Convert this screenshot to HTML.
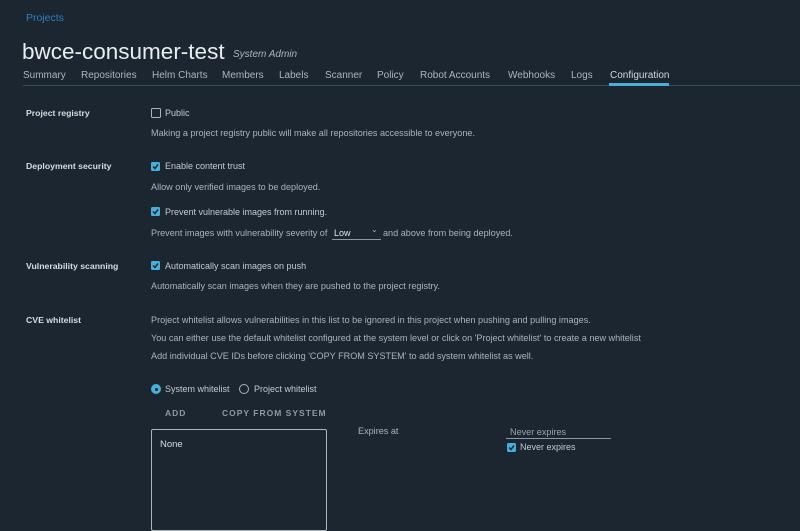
<!DOCTYPE html>
<html><head><meta charset="utf-8"><style>
html,body{margin:0;padding:0}
body{width:800px;height:524px;background:#1c2630;position:relative;overflow:hidden;font-family:"Liberation Sans",sans-serif;color:#c9d1d7}
.a{position:absolute;white-space:nowrap}
.t{font-size:9px;color:#c3cbd1}
.d{font-size:9.1px;color:#aab4bb}
.l{font-size:8.7px;font-weight:bold;color:#d6dde2}
.nav{font-size:10px;color:#aab5bd}
.cb{position:absolute;width:9px;height:9px;border-radius:1.5px;background:#49afd9;}
.cb svg{position:absolute;left:1px;top:1px}
.cbe{position:absolute;width:8px;height:8px;border:1px solid #aab4bb;border-radius:1.5px}
</style></head><body>
<div class="a" style="left:26px;top:12px;font-size:10.5px;color:#2f7fbf">Projects</div>
<div class="a" style="left:22px;top:39px;font-size:22.5px;color:#e8edf0">bwce-consumer-test</div>
<div class="a" style="left:233px;top:49px;font-size:10px;font-style:italic;color:#aab4bb">System Admin</div>
<div class="a nav" style="left:23px;top:70px">Summary</div>
<div class="a nav" style="left:81px;top:70px">Repositories</div>
<div class="a nav" style="left:152px;top:70px">Helm Charts</div>
<div class="a nav" style="left:222px;top:70px">Members</div>
<div class="a nav" style="left:279px;top:70px">Labels</div>
<div class="a nav" style="left:325px;top:70px">Scanner</div>
<div class="a nav" style="left:377px;top:70px">Policy</div>
<div class="a nav" style="left:420px;top:70px">Robot Accounts</div>
<div class="a nav" style="left:508px;top:70px">Webhooks</div>
<div class="a nav" style="left:571px;top:70px">Logs</div>
<div class="a nav" style="left:610px;top:70px;color:#cfd7dc">Configuration</div>
<div class="a" style="left:23px;top:85px;width:777px;height:1px;background:#3a4a56"></div>
<div class="a" style="left:609px;top:83px;width:60px;height:3px;background:#49afd9"></div>

<div class="a l" style="left:26px;top:108px">Project registry</div>
<div class="cbe" style="left:151px;top:108px"></div>
<div class="a t" style="left:165px;top:108px">Public</div>
<div class="a d" style="left:151px;top:128px">Making a project registry public will make all repositories accessible to everyone.</div>

<div class="a l" style="left:26px;top:161px">Deployment security</div>
<div class="cb" style="left:151px;top:162px"><svg width="7" height="7" viewBox="0 0 7 7"><path d="M1 3.5L3 5.5L6 1.5" stroke="#1c2630" stroke-width="1.5" fill="none"/></svg></div>
<div class="a t" style="left:165px;top:161px">Enable content trust</div>
<div class="a d" style="left:151px;top:182px">Allow only verified images to be deployed.</div>
<div class="cb" style="left:151px;top:207px"><svg width="7" height="7" viewBox="0 0 7 7"><path d="M1 3.5L3 5.5L6 1.5" stroke="#1c2630" stroke-width="1.5" fill="none"/></svg></div>
<div class="a t" style="left:165px;top:207px">Prevent vulnerable images from running.</div>
<div class="a d" style="left:151px;top:228px">Prevent images with vulnerability severity of</div>
<div class="a t" style="left:334px;top:228px;color:#e0e6ea">Low</div>
<div class="a" style="left:371px;top:225px;font-size:8px;color:#aab4bb">&#8964;</div>
<div class="a" style="left:332px;top:239px;width:49px;height:1px;background:#8d99a2"></div>
<div class="a d" style="left:383px;top:228px">and above from being deployed.</div>

<div class="a l" style="left:26px;top:261px">Vulnerability scanning</div>
<div class="cb" style="left:151px;top:261px"><svg width="7" height="7" viewBox="0 0 7 7"><path d="M1 3.5L3 5.5L6 1.5" stroke="#1c2630" stroke-width="1.5" fill="none"/></svg></div>
<div class="a t" style="left:165px;top:261px">Automatically scan images on push</div>
<div class="a d" style="left:151px;top:281px">Automatically scan images when they are pushed to the project registry.</div>

<div class="a l" style="left:26px;top:315px">CVE whitelist</div>
<div class="a d" style="left:151px;top:315px">Project whitelist allows vulnerabilities in this list to be ignored in this project when pushing and pulling images.</div>
<div class="a d" style="left:151px;top:333px">You can either use the default whitelist configured at the system level or click on 'Project whitelist' to create a new whitelist</div>
<div class="a d" style="left:151px;top:351px">Add individual CVE IDs before clicking 'COPY FROM SYSTEM' to add system whitelist as well.</div>

<div class="a" style="left:151px;top:384px;width:10px;height:10px;border-radius:50%;background:#49afd9"><div style="position:absolute;left:3.5px;top:3.5px;width:3px;height:3px;border-radius:50%;background:#1c2630"></div></div>
<div class="a t" style="left:165px;top:384px">System whitelist</div>
<div class="a" style="left:239px;top:384px;width:8px;height:8px;border-radius:50%;border:1px solid #aab4bb"></div>
<div class="a t" style="left:254px;top:384px">Project whitelist</div>
<div class="a" style="left:165px;top:408px;font-size:8.5px;font-weight:bold;letter-spacing:1px;color:#8d99a2">ADD</div>
<div class="a" style="left:222px;top:408px;font-size:8.5px;font-weight:bold;letter-spacing:1px;color:#8d99a2">COPY FROM SYSTEM</div>
<div class="a" style="left:151px;top:429px;width:174px;height:100px;border:1px solid #aab4bb;border-radius:2px"></div>
<div class="a" style="left:160px;top:439px;font-size:9.5px;color:#d6dde2">None</div>
<div class="a d" style="left:358px;top:426px">Expires at</div>
<div class="a d" style="left:510px;top:427px;color:#98a3ab">Never expires</div>
<div class="a" style="left:506px;top:438px;width:105px;height:1px;background:#8d99a2"></div>
<div class="cb" style="left:507px;top:443px"><svg width="7" height="7" viewBox="0 0 7 7"><path d="M1 3.5L3 5.5L6 1.5" stroke="#1c2630" stroke-width="1.5" fill="none"/></svg></div>
<div class="a t" style="left:520px;top:442px">Never expires</div>
</body></html>
